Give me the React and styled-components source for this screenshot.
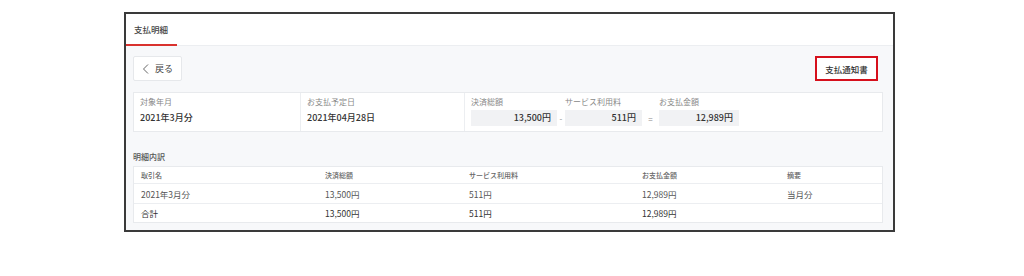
import React from 'react'
import styled, { createGlobalStyle } from 'styled-components'

const GlobalStyle = createGlobalStyle`
  html, body {
    margin: 0;
    padding: 0;
    background: #fff;
  }
  body {
    font-family: "Noto Sans CJK JP", "Noto Sans", sans-serif;
    color: #333;
  }
`

const Page = styled.div`
  padding: 12px 0 0 124px;
`

const Frame = styled.div`
  width: 767px;
  height: 216px;
  border: 2px solid #3a3a3a;
  background: #f7f8fa;
  display: flex;
  flex-direction: column;
`

const TabBar = styled.div`
  height: 31px;
  background: #fff;
  border-bottom: 1px solid #eceef1;
  display: flex;
`

const Tab = styled.div`
  display: flex;
  align-items: center;
  padding: 0 9px 0 8px;
  font-size: 8.5px;
  font-weight: 500;
  color: #444;
  border-bottom: 2px solid ${(p) => (p.active ? '#d9322e' : 'transparent')};
  margin-bottom: -1px;
`

const Body = styled.div`
  flex: 1;
  padding: 10px 10px 0 7px;
  display: flex;
  flex-direction: column;
`

const Actions = styled.div`
  display: flex;
  justify-content: space-between;
  align-items: center;
  height: 25px;
`

const BackButton = styled.button`
  height: 25px;
  width: 49px;
  background: #fff;
  border: 1px solid #e6e8eb;
  border-radius: 2px;
  display: flex;
  align-items: center;
  gap: 5px;
  padding: 0 0 0 8px;
  font-family: inherit;
  font-size: 9px;
  color: #444;
  svg {
    width: 8px;
    height: 10px;
  }
`

const NoticeButton = styled.button`
  height: 25px;
  width: 63px;
  margin-right: 5px;
  background: #fff;
  border: 2.5px solid #d6101c;
  border-radius: 0;
  font-family: inherit;
  font-size: 8.5px;
  font-weight: 500;
  color: #333;
  padding: 0;
`

const InfoCard = styled.div`
  margin-top: 11px;
  height: 40px;
  background: #fff;
  border: 1px solid #e8eaed;
  box-sizing: border-box;
  display: grid;
  grid-template-columns: 166px 164px 1fr;
`

const InfoCell = styled.div`
  padding: 3px 6px 0 6px;
  border-left: ${(p) => (p.first ? 'none' : '1px solid #eceef1')};
`

const Label = styled.div`
  font-size: 8px;
  line-height: 12px;
  color: #888;
`

const Value = styled.div`
  margin-top: 3px;
  font-size: 9px;
  line-height: 14px;
  font-weight: 500;
  color: #333;
`

const Formula = styled.div`
  display: grid;
  grid-template-columns: 86px 8px 77px 17px 80px;
  grid-template-rows: 12px 16px;
  row-gap: 2px;
  align-items: center;
`

const Amount = styled.div`
  background: #f1f2f4;
  height: 16px;
  line-height: 16px;
  text-align: right;
  padding-right: 6px;
  font-size: 9px;
  font-weight: 500;
  color: #333;
`

const Operator = styled.div`
  text-align: center;
  font-size: 8px;
  color: #888;
`

const SectionTitle = styled.div`
  margin-top: 19px;
  font-size: 8px;
  line-height: 12px;
  font-weight: 500;
  color: #555;
`

const Table = styled.div`
  margin-top: 3px;
  background: #fff;
  border: 1px solid #e8eaed;
`

const Row = styled.div`
  display: grid;
  grid-template-columns: 184px 144px 173px 145px 1fr;
  align-items: center;
  height: ${(p) => p.h}px;
  padding-left: 7px;
  border-top: ${(p) => (p.first ? 'none' : '1px solid #eceef1')};
  font-size: ${(p) => (p.head ? '7px' : '8.5px')};
  font-weight: ${(p) => (p.head ? 500 : 400)};
  color: ${(p) => (p.head ? '#666' : p.dark ? '#333' : '#555')};
`

const rows = [
  ['2021年3月分', '13,500円', '511円', '12,989円', '当月分'],
]

export default function App() {
  return (
    <>
      <GlobalStyle />
      <Page>
        <Frame>
          <TabBar>
            <Tab active>支払明細</Tab>
          </TabBar>
          <Body>
            <Actions>
              <BackButton>
                <svg viewBox="0 0 8 10" fill="none" stroke="#666" strokeWidth="1">
                  <path d="M6 0.5 L1.5 5 L6 9.5" />
                </svg>
                戻る
              </BackButton>
              <NoticeButton>支払通知書</NoticeButton>
            </Actions>

            <InfoCard>
              <InfoCell first>
                <Label>対象年月</Label>
                <Value>2021年3月分</Value>
              </InfoCell>
              <InfoCell>
                <Label>お支払予定日</Label>
                <Value>2021年04月28日</Value>
              </InfoCell>
              <InfoCell>
                <Formula>
                  <Label>決済総額</Label>
                  <span />
                  <Label>サービス利用料</Label>
                  <span />
                  <Label>お支払金額</Label>
                  <Amount>13,500円</Amount>
                  <Operator>-</Operator>
                  <Amount>511円</Amount>
                  <Operator>=</Operator>
                  <Amount>12,989円</Amount>
                </Formula>
              </InfoCell>
            </InfoCard>

            <SectionTitle>明細内訳</SectionTitle>
            <Table>
              <Row head first h={16}>
                <span>取引名</span>
                <span>決済総額</span>
                <span>サービス利用料</span>
                <span>お支払金額</span>
                <span>摘要</span>
              </Row>
              {rows.map((r, i) => (
                <Row key={i} h={19}>
                  {r.map((c, j) => (
                    <span key={j}>{c}</span>
                  ))}
                </Row>
              ))}
              <Row dark h={18}>
                <span>合計</span>
                <span>13,500円</span>
                <span>511円</span>
                <span>12,989円</span>
                <span />
              </Row>
            </Table>
          </Body>
        </Frame>
      </Page>
    </>
  )
}
